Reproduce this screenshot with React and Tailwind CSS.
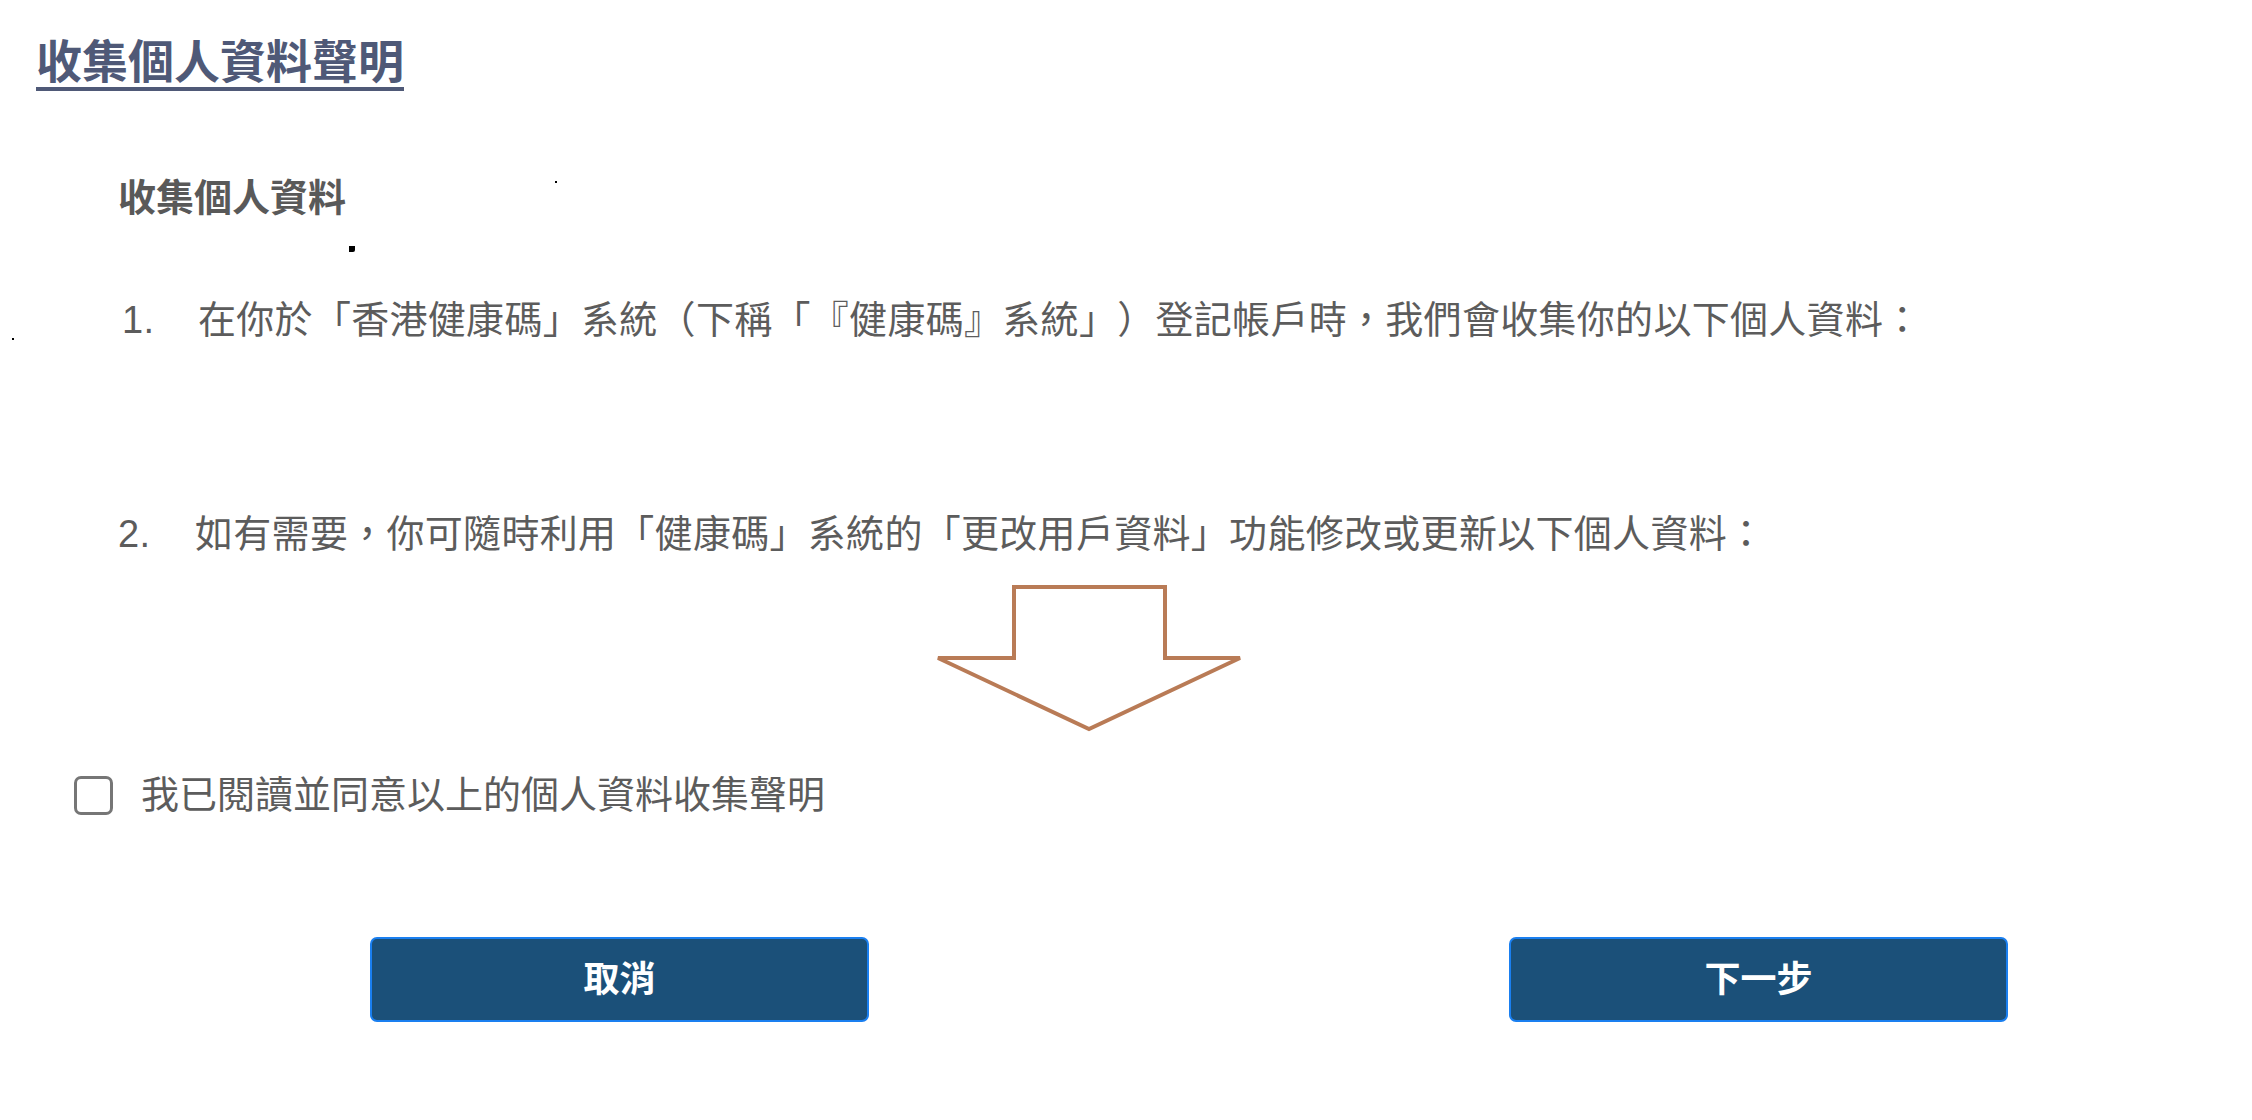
import React from 'react';

const font = { fontFamily: '"Liberation Sans", "Noto Sans CJK TC", sans-serif' };

const DownArrow = () => (
  <svg width="308" height="150" viewBox="0 0 308 150" className="block">
    <polygon
      points="3,75 79,75 79,4 230,4 230,75 305,75 154,146"
      fill="none"
      stroke="#b97b56"
      strokeWidth="4"
      strokeLinejoin="miter"
    />
  </svg>
);

const App = () => {
  return (
    <div
      className="relative w-full min-h-screen bg-white overflow-hidden [text-spacing-trim:space-all]"
      style={font}
    >
      {/* stray marks from the source page */}
      <span className="absolute left-[555px] top-[181px] w-[2px] h-[2px] bg-black" />
      <span className="absolute left-[349px] top-[246px] w-[6px] h-[6px] bg-black rounded-br-[2px]" />
      <span className="absolute left-[12px] top-[338px] w-[2px] h-[2px] bg-black" />

      <div className="pl-[36px] pt-[34px]">
        <h1 className="text-[46px] leading-[56px] font-bold text-[#4f5977] underline decoration-[4px] underline-offset-[9px]">
          收集個人資料聲明
        </h1>
      </div>

      <h2 className="mt-[85px] pl-[118px] text-[38px] leading-[46px] font-bold text-[#595959]">
        收集個人資料
      </h2>

      <ol className="text-[38px] leading-[46px] text-[#5c5c5c] tracking-[0.3px]">
        <li className="mt-[76px] flex pl-[122px]">
          <span className="w-[76px] shrink-0">1.</span>
          <span>在你於「香港健康碼」系統（下稱「『健康碼』系統」）登記帳戶時，我們會收集你的以下個人資料：</span>
        </li>
        <li className="mt-[168px] flex pl-[118px]">
          <span className="w-[77px] shrink-0">2.</span>
          <span>如有需要，你可隨時利用「健康碼」系統的「更改用戶資料」功能修改或更新以下個人資料：</span>
        </li>
      </ol>

      <div className="mt-[26px] pl-[935px]">
        <DownArrow />
      </div>

      <label className="mt-[39px] pl-[74px] flex items-center gap-[28px] text-[38px] leading-[46px] text-[#5c5c5c]">
        <span className="w-[39px] h-[39px] rounded-[7px] border-[3px] border-[#767676] bg-white shrink-0" />
        <span>我已閱讀並同意以上的個人資料收集聲明</span>
      </label>

      <div className="mt-[119px] pl-[370px] flex gap-[640px]">
        <button className="w-[499px] h-[85px] rounded-[7px] bg-[#1b5079] border-2 border-[#1a7ff0] text-white text-[36px] font-bold flex items-center justify-center">
          取消
        </button>
        <button className="w-[499px] h-[85px] rounded-[7px] bg-[#1b5079] border-2 border-[#1a7ff0] text-white text-[36px] font-bold flex items-center justify-center">
          下一步
        </button>
      </div>
    </div>
  );
};

export default App;
